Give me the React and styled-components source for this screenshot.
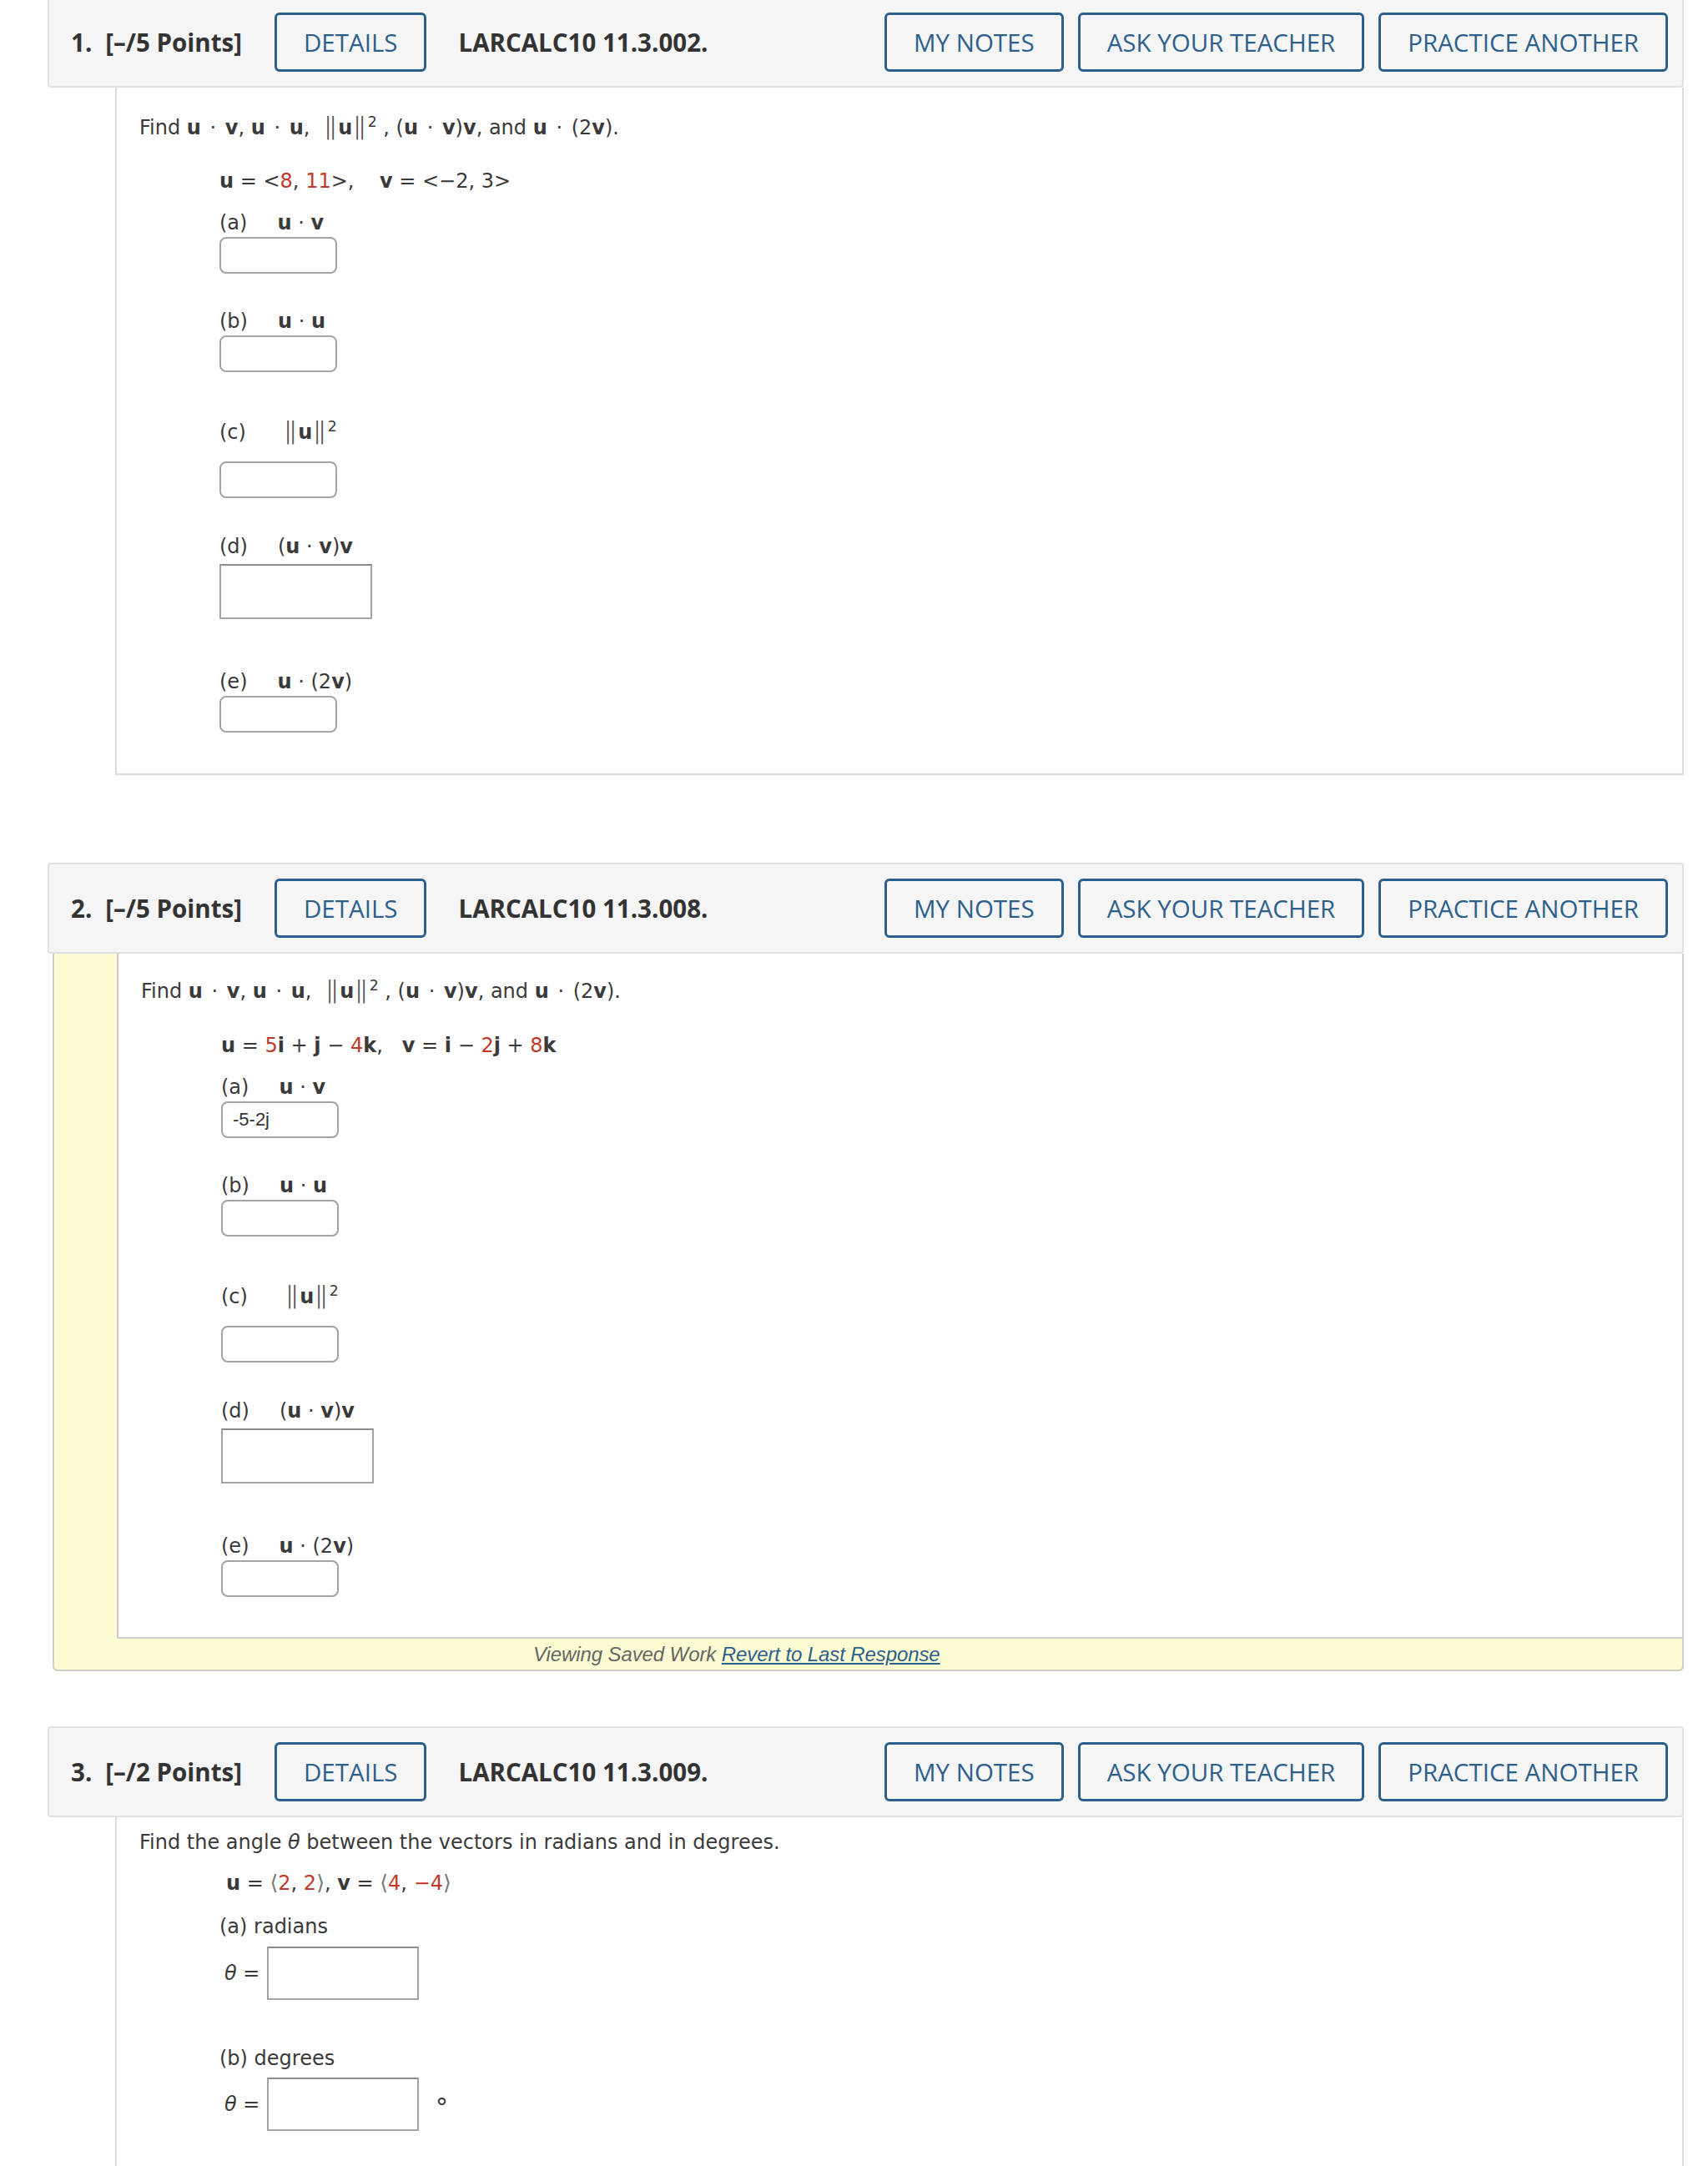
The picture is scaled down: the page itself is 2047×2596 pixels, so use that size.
import React from "react";
import styled, { createGlobalStyle } from "styled-components";

const GlobalStyle = createGlobalStyle`
  body {
    margin: 0;
    background: #fff;
    color: #333;
    font-family: "DejaVu Sans", Verdana, sans-serif;
  }
`;

const Page = styled.div`
  padding: 0 29px 0 57px;
  margin-top: -4px;
`;

const Question = styled.section`
  margin-bottom: ${(p) => p.$after || 0}px;
`;

const Header = styled.div`
  display: flex;
  align-items: center;
  height: 109px;
  box-sizing: border-box;
  padding: 0 17px 0 26px;
  background: #f5f5f5;
  border: 2px solid #e1e1e1;
  border-radius: 4px;
  font-family: "Open Sans", "Noto Sans", sans-serif;
  font-size: 29.5px;
  color: #333;
`;

const QNum = styled.span`
  font-weight: 700;
  margin-right: 16px;
`;

const Points = styled.span`
  font-weight: 700;
`;

const Code = styled.span`
  font-weight: 700;
  margin-left: 38px;
`;

const Actions = styled.div`
  display: flex;
  gap: 17px;
  margin-left: auto;
`;

const Button = styled.button`
  height: 71px;
  box-sizing: border-box;
  padding: 0 32px;
  margin-left: ${(p) => p.$left || 0}px;
  border: 3px solid #2d5f8c;
  border-radius: 6px;
  background: transparent;
  color: #2d5f8c;
  font-family: "Open Sans", "Noto Sans", sans-serif;
  font-size: 29.5px;
  font-weight: 500;
  cursor: pointer;
`;

const Body = styled.div`
  margin-left: 81px;
  background: #fff;
  border: 2px solid #dcdcdc;
  border-top: none;
  padding: ${(p) => p.$top}px 0 ${(p) => p.$bottom}px 27px;
`;

const Saved = styled.div`
  margin-left: 6px;
  background: #fefcd2;
  border: 2px solid #cfcfc8;
  border-top: none;
  border-radius: 0 0 6px 6px;
`;

const SavedBody = styled(Body)`
  margin-left: 75px;
  border-left: 2px solid #cfcfc8;
  border-right: none;
  border-bottom: 2px solid #cfcfc8;
`;

const SavedNote = styled.div`
  height: 37px;
  line-height: 37px;
  padding-left: 574px;
  font-family: "Liberation Sans", Arial, sans-serif;
  font-style: italic;
  font-size: 24px;
  letter-spacing: -0.1px;
  color: #666;

  a {
    color: #2d5f8c;
    text-decoration: underline;
  }
`;

const Prose = styled.div`
  font-size: 24px;
  line-height: 34px;
  color: #3a3a3a;
  white-space: pre-wrap;
`;

const MathLine = styled.div`
  margin-top: ${(p) => p.$top}px;
  padding-left: ${(p) => p.$indent || 96}px;
  font-size: 24px;
  line-height: 34px;
  color: #3a3a3a;
  white-space: pre;
`;

const B = styled.b`
  font-weight: 700;
`;

const Red = styled.span`
  color: #c0392b;
`;

const Dot = styled.span`
  margin: 0 3px;
`;

const Bar = styled.span`
  display: inline-block;
  margin: 0 2px;
  font-weight: 300;
  color: #555;
  font-size: 1.2em;
  line-height: 0;
  transform: scaleX(1.3);
`;

const Angle = styled.span`
  color: #777;
  font-size: 1.05em;
`;

const Sup = styled.sup`
  font-size: 0.72em;
  line-height: 0;
`;

const PartBlock = styled.div`
  margin-top: ${(p) => p.$gap}px;
  padding-left: 96px;
`;

const PartLabel = styled.div`
  font-size: 24px;
  line-height: 34px;
  color: #3a3a3a;
  white-space: pre;
`;

const Letter = styled.span`
  display: inline-block;
  margin-right: 36px;
`;

const AnswerBox = styled.div`
  margin-top: ${(p) => p.$gapTop || 0}px;
  box-sizing: border-box;
  width: ${(p) => (p.$wide ? 183 : 141)}px;
  height: ${(p) => (p.$wide ? 66 : 44)}px;
  border: 2px solid #a3a3a3;
  border-top-color: ${(p) => (p.$wide ? "#8c8c8c" : "#a3a3a3")};
  border-radius: ${(p) => (p.$wide ? 0 : 8)}px;
  background: #fff;
  padding: 0 12px;
  font-family: "Liberation Sans", Arial, sans-serif;
  font-size: 22px;
  line-height: 40px;
  color: #333;
`;

const ThetaRow = styled.div`
  display: flex;
  align-items: center;
  margin-top: ${(p) => p.$top}px;
  padding-left: 102px;
`;

const Theta = styled.span`
  width: 51px;
  font-size: 24px;
  color: #3a3a3a;
  white-space: pre;

  i {
    font-style: italic;
  }
`;

const SquareBox = styled.div`
  box-sizing: border-box;
  width: 182px;
  height: 64px;
  border: 2px solid #a3a3a3;
  border-top-color: #8c8c8c;
  background: #fff;
`;

const Degree = styled.span`
  margin-left: 20px;
  padding-top: 6px;
  font-size: 30px;
  color: #3a3a3a;
`;

const Norm = () => (
  <>
    <Bar>‖</Bar>
    <B>u</B>
    <Bar>‖</Bar>
    <Sup>2</Sup>
  </>
);

const Statement = () => (
  <Prose>
    Find <B>u</B> <Dot>·</Dot> <B>v</B>, <B>u</B> <Dot>·</Dot> <B>u</B>,{"  "}
    <Norm /> , (<B>u</B> <Dot>·</Dot> <B>v</B>)<B>v</B>, and <B>u</B>{" "}
    <Dot>·</Dot> (2<B>v</B>).
  </Prose>
);

const parts = [
  { label: "(a)", math: <><B>u</B> · <B>v</B></>, gap: 16 },
  { label: "(b)", math: <><B>u</B> · <B>u</B></>, gap: 40 },
  { label: "(c)", math: <span style={{ marginLeft: 8 }}><Norm /></span>, gap: 55, labelGap: 18 },
  { label: "(d)", math: <>(<B>u</B> · <B>v</B>)<B>v</B></>, gap: 41, labelGap: 4, wide: true },
  { label: "(e)", math: <><B>u</B> · (2<B>v</B>)</>, gap: 58 },
];

const Parts = ({ values = {} }) =>
  parts.map((p) => (
    <PartBlock key={p.label} $gap={p.gap}>
      <PartLabel>
        <Letter>{p.label}</Letter>
        {p.math}
      </PartLabel>
      <AnswerBox $wide={p.wide} $gapTop={p.labelGap}>
        {values[p.label]}
      </AnswerBox>
    </PartBlock>
  ));

const QHeader = ({ num, pts, code }) => (
  <Header>
    <QNum>{num}.</QNum>
    <Points>[–/{pts} Points]</Points>
    <Button $left={39}>DETAILS</Button>
    <Code>{code}</Code>
    <Actions>
      <Button>MY NOTES</Button>
      <Button>ASK YOUR TEACHER</Button>
      <Button>PRACTICE ANOTHER</Button>
    </Actions>
  </Header>
);

export default function App() {
  return (
    <Page>
      <GlobalStyle />

      <Question $after={105}>
        <QHeader num={1} pts={5} code="LARCALC10 11.3.002." />
        <Body $top={31} $bottom={49}>
          <Statement />
          <MathLine $top={30}>
            <B>u</B> = &lt;<Red>8</Red>, <Red>11</Red>&gt;,{"    "}
            <B>v</B> = &lt;−2, 3&gt;
          </MathLine>
          <Parts />
        </Body>
      </Question>

      <Question $after={66}>
        <QHeader num={2} pts={5} code="LARCALC10 11.3.008." />
        <Saved>
          <SavedBody $top={28} $bottom={48}>
            <Statement />
            <MathLine $top={31}>
              <B>u</B> = <Red>5</Red><B>i</B> + <B>j</B> − <Red>4</Red>
              <B>k</B>,{"   "}<B>v</B> = <B>i</B> − <Red>2</Red><B>j</B> +{" "}
              <Red>8</Red><B>k</B>
            </MathLine>
            <Parts values={{ "(a)": "-5-2j" }} />
          </SavedBody>
          <SavedNote>
            Viewing Saved Work <a href="#revert">Revert to Last Response</a>
          </SavedNote>
        </Saved>
      </Question>

      <Question>
        <QHeader num={3} pts={2} code="LARCALC10 11.3.009." />
        <Body $top={13} $bottom={120}>
          <Prose>
            Find the angle <i>θ</i> between the vectors in radians and in
            degrees.
          </Prose>
          <MathLine $top={15} $indent={104}>
            <B>u</B> = <Angle>⟨</Angle><Red>2</Red>, <Red>2</Red>
            <Angle>⟩</Angle>, <B>v</B> = <Angle>⟨</Angle><Red>4</Red>,{" "}
            <Red>−4</Red><Angle>⟩</Angle>
          </MathLine>
          <PartBlock $gap={18}>
            <PartLabel>(a) radians</PartLabel>
          </PartBlock>
          <ThetaRow $top={7}>
            <Theta>
              <i>θ</i> =
            </Theta>
            <SquareBox />
          </ThetaRow>
          <PartBlock $gap={53}>
            <PartLabel>(b) degrees</PartLabel>
          </PartBlock>
          <ThetaRow $top={6}>
            <Theta>
              <i>θ</i> =
            </Theta>
            <SquareBox />
            <Degree>°</Degree>
          </ThetaRow>
        </Body>
      </Question>
    </Page>
  );
}
